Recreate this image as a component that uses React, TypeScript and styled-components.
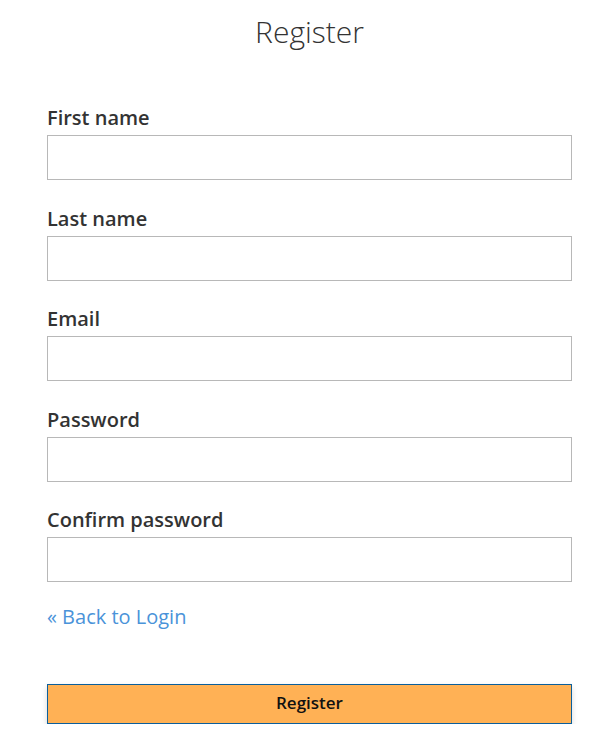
import React from "react";
import styled, { createGlobalStyle } from "styled-components";

const Global = createGlobalStyle`
  html, body { margin: 0; padding: 0; background: #fff; }
  body { font-family: "Open Sans", "Liberation Sans", sans-serif; color: #333; }
  * { box-sizing: border-box; }
`;

const Page = styled.div`
  width: 608px;
  padding: 0 36px 0 47px;
`;

const Form = styled.form`
  width: 525px;
  display: flex;
  flex-direction: column;
`;

const Title = styled.h1`
  margin: 14px 0 0;
  text-align: center;
  font-weight: 300;
  font-size: 30px;
  line-height: 36px;
  color: #333;
`;

const Fields = styled.div`
  display: flex;
  flex-direction: column;
  gap: 25.5px;
  margin-top: 55px;
`;

const Field = styled.div`
  display: flex;
  flex-direction: column;
`;

const Label = styled.label`
  font-size: 20px;
  font-weight: 600;
  line-height: 26px;
  margin-bottom: 4px;
  color: #333;
`;

const Input = styled.input`
  height: 45px;
  width: 100%;
  border: 1px solid #b8b8b8;
  padding: 0 10px;
  font-size: 16px;
  outline: none;
`;

const BackLink = styled.a`
  margin-top: 22px;
  font-size: 20px;
  line-height: 26px;
  color: #4a93d9;
  text-decoration: none;
`;

const Button = styled.button`
  margin-top: 54px;
  height: 40px;
  width: 100%;
  background: #ffb155;
  border: 1px solid #0b5f9c;
  font-family: inherit;
  font-size: 17px;
  font-weight: 600;
  line-height: 36px;
  padding: 0 0 2px;
  color: #111;
  box-shadow: 0 3px 6px rgba(0, 0, 0, 0.15);
`;

const fields = ["First name", "Last name", "Email", "Password", "Confirm password"];

export default function App() {
  return (
    <>
      <Global />
      <Page>
        <Form onSubmit={(e) => e.preventDefault()}>
          <Title>Register</Title>
          <Fields>
            {fields.map((f) => (
              <Field key={f}>
                <Label>{f}</Label>
                <Input type={f.toLowerCase().includes("password") ? "password" : "text"} />
              </Field>
            ))}
          </Fields>
          <BackLink href="#">« Back to Login</BackLink>
          <Button type="submit">Register</Button>
        </Form>
      </Page>
    </>
  );
}
